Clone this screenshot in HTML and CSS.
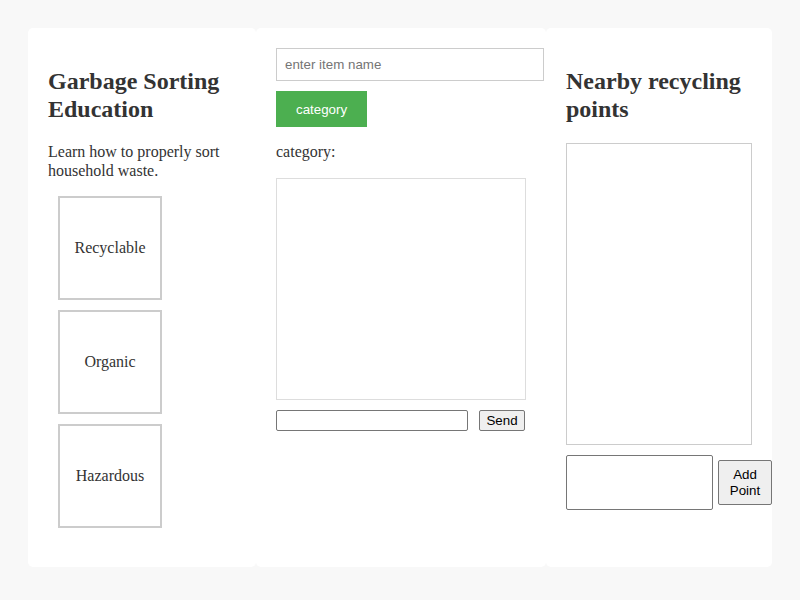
FILE: index.html
```html
<!DOCTYPE html>
<html>
<head>
<meta charset="utf-8">
<link rel="stylesheet" href="styles.css">
</head>
<body>
<div class="app">
  <section class="panel panel-left">
    <h2 class="title">Garbage Sorting Education</h2>
    <p class="intro">Learn how to properly sort household waste.</p>
    <div class="cat-box">Recyclable</div>
    <div class="cat-box">Organic</div>
    <div class="cat-box">Hazardous</div>
  </section>
  <section class="panel panel-mid">
    <input class="item-input" type="text" placeholder="enter item name">
    <button class="cat-btn">category</button>
    <p class="cat-label">category:</p>
    <div class="chat-box"></div>
    <div class="send-row">
      <input class="send-input" type="text">
      <button class="send-btn">Send</button>
    </div>
  </section>
  <section class="panel panel-right">
    <h2 class="title">Nearby recycling points</h2>
    <div class="map-box"></div>
    <div class="add-row">
      <textarea class="point-input"></textarea>
      <button class="add-btn">Add Point</button>
    </div>
  </section>
</div>
</body>
</html>
```
FILE: styles.css
```css
html, body {
  margin: 0;
  padding: 0;
}
body {
  background: #f8f8f8;
  font-family: "Liberation Serif", "Times New Roman", serif;
  color: #333;
  line-height: 1.15;
}
.app {
  display: flex;
  padding: 28px;
  align-items: flex-start;
}
.panel {
  background: #fff;
  border-radius: 5px;
  height: 539px;
  box-sizing: border-box;
  padding: 20px;
}
.panel-left { width: 228px; }
.panel-mid { width: 290px; }
.panel-right { width: 226px; }

.title {
  font-size: 24px;
  font-weight: bold;
  margin: 20px 0;
  color: #333;
}
.intro {
  font-size: 16px;
  margin: 16px 0;
}
.cat-box {
  width: 100px;
  height: 100px;
  border: 2px solid #ccc;
  margin: 10px;
  display: flex;
  align-items: center;
  justify-content: center;
  font-size: 16px;
}

.item-input {
  display: block;
  width: 250px;
  padding: 8px;
  border: 1px solid #ccc;
  font-family: "Liberation Sans", Arial, sans-serif;
  font-size: 13.33px;
  margin: 0 0 10px 0;
  outline: none;
}
.item-input::placeholder { color: #757575; }
.cat-btn {
  display: block;
  background: #4caf50;
  color: #fff;
  border: none;
  padding: 10px 20px;
  font-family: "Liberation Sans", Arial, sans-serif;
  font-size: 13.33px;
  width: 91px;
  height: 36px;
}
.cat-label {
  font-size: 16px;
  margin: 16px 0 17px;
}
.chat-box {
  width: 250px;
  height: 222px;
  box-sizing: border-box;
  border: 1px solid #ddd;
}
.send-row {
  display: flex;
  align-items: center;
  margin-top: 10px;
}
.send-input {
  width: 192px;
  height: 21px;
  box-sizing: border-box;
  border: 1px solid #767676;
  border-radius: 2px;
  padding: 1px 2px;
  margin: 0;
}
.send-btn {
  margin-left: 11px;
  width: 46px;
  height: 21px;
  box-sizing: border-box;
  background: #efefef;
  border: 1px solid #767676;
  border-radius: 2px;
  font-family: "Liberation Sans", Arial, sans-serif;
  font-size: 13.33px;
  line-height: normal;
  padding: 1px 6px;
  color: #000;
}
.map-box {
  width: 186px;
  height: 302px;
  box-sizing: border-box;
  border: 1px solid #ccc;
}
.add-row {
  display: flex;
  align-items: center;
  margin-top: 10px;
}
.point-input {
  flex-shrink: 0;
  width: 147px;
  height: 55px;
  box-sizing: border-box;
  border: 1px solid #767676;
  border-radius: 2px;
  margin: 0;
  resize: none;
}
.add-btn {
  flex-shrink: 0;
  margin-left: 5px;
  width: 54px;
  height: 45px;
  box-sizing: border-box;
  background: #efefef;
  border: 1px solid #767676;
  border-radius: 2px;
  font-family: "Liberation Sans", Arial, sans-serif;
  font-size: 13.33px;
  line-height: 16px;
  padding: 5px 6px;
  color: #000;
}
```
